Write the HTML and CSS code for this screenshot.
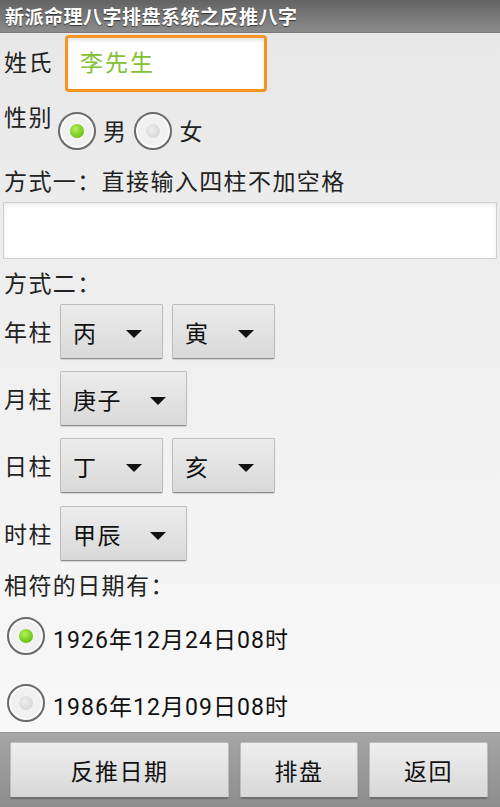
FILE: index.html
```html
<!DOCTYPE html>
<html lang="zh">
<head>
<meta charset="utf-8">
<title>新派命理八字排盘系统之反推八字</title>
<link rel="stylesheet" href="styles.css">
</head>
<body>
<div class="app">
  <header class="titlebar">新派命理八字排盘系统之反推八字</header>
  <main class="content">
    <div class="row-name">
      <span class="label name-label">姓氏</span>
      <div class="name-input">李先生</div>
    </div>
    <div class="row-gender">
      <span class="label gender-label">性别</span>
      <div class="radio-group">
        <span class="radio checked"></span><span class="radio-text">男</span>
        <span class="radio"></span><span class="radio-text">女</span>
      </div>
    </div>
    <div class="line">方式一：直接输入四柱不加空格</div>
    <div class="bazi-input"></div>
    <div class="line">方式二：</div>
    <div class="pillar">
      <span class="label pillar-label">年柱</span>
      <div class="spinner"><span>丙</span></div>
      <div class="spinner"><span>寅</span></div>
    </div>
    <div class="pillar">
      <span class="label pillar-label">月柱</span>
      <div class="spinner wide"><span>庚子</span></div>
    </div>
    <div class="pillar">
      <span class="label pillar-label">日柱</span>
      <div class="spinner"><span>丁</span></div>
      <div class="spinner"><span>亥</span></div>
    </div>
    <div class="pillar last">
      <span class="label pillar-label">时柱</span>
      <div class="spinner wide"><span>甲辰</span></div>
    </div>
    <div class="line">相符的日期有：</div>
    <div class="date-row">
      <span class="radio checked"></span><span class="date-text">1926年12月24日08时</span>
    </div>
    <div class="date-row">
      <span class="radio"></span><span class="date-text">1986年12月09日08时</span>
    </div>
  </main>
  <footer class="bottombar">
    <div class="btn btn-wide">反推日期</div>
    <div class="btn">排盘</div>
    <div class="btn">返回</div>
  </footer>
</div>
</body>
</html>
```
FILE: styles.css
```css
html, body {
  margin: 0;
  padding: 0;
}
body {
  width: 500px;
  height: 807px;
  overflow: hidden;
  font-family: Roboto, "Noto Sans CJK SC", sans-serif;
  color: #222;
}
.app {
  width: 500px;
  height: 807px;
  display: flex;
  flex-direction: column;
  background: linear-gradient(#e7e7e7, #fafafa);
}
.titlebar {
  height: 33px;
  line-height: 32px;
  box-sizing: border-box;
  padding-left: 5px;
  font-family: "Noto Sans CJK SC", sans-serif;
  font-size: 19px;
  letter-spacing: 0.5px;
  font-weight: bold;
  color: #fff;
  text-shadow: 0 1px 1px rgba(0,0,0,0.6);
  background: linear-gradient(#636363, #8b8b8b);
  border-bottom: 1px solid #7a7a7a;
  flex: none;
  white-space: nowrap;
}
.content {
  flex: 1;
  overflow: hidden;
  padding-left: 4px;
  font-size: 23px;
  letter-spacing: 1.4px;
}
.label {
  font-size: 23px;
  line-height: 30px;
}
.row-name {
  display: flex;
  align-items: center;
  margin-top: 2px;
  height: 57px;
}
.name-label {
  width: 61px;
}
.name-input {
  width: 202px;
  height: 57px;
  box-sizing: border-box;
  border: 3px solid #f39423;
  border-radius: 4px;
  background: #fff;
  box-shadow: inset 0 2px 4px rgba(0,0,0,0.12);
  color: #82c034;
  font-size: 23px;
  letter-spacing: 2px;
  line-height: 51px;
  padding-left: 12px;
}
.row-gender {
  display: flex;
  height: 76px;
}
.gender-label {
  margin-top: 12px;
  width: 54px;
}
.radio-group {
  display: flex;
  align-items: center;
  height: 40px;
  margin-top: 19px;
}
.radio {
  width: 38px;
  height: 38px;
  box-sizing: border-box;
  border-radius: 50%;
  border: 2px solid #6a6a6a;
  background: radial-gradient(circle, #f4f4f4 0%, #f0f0f0 60%, #e2e2e2 100%);
  box-shadow: inset 0 0 0 2px #fafafa;
  position: relative;
  flex: none;
}
.radio::after {
  content: "";
  position: absolute;
  left: 50%;
  top: 50%;
  width: 14px;
  height: 14px;
  margin: -7px 0 0 -7px;
  border-radius: 50%;
  background: radial-gradient(circle at 40% 40%, #eeeeee, #cfcfcf);
}
.radio.checked::after {
  background: radial-gradient(circle at 40% 35%, #b4f05a, #6cc414 70%, #5aa80e);
}
.radio-group .radio-text {
  margin: 4px 7px 0 7px;
  line-height: 30px;
}
.line {
  line-height: 30px;
  height: 30px;
  white-space: nowrap;
}
.bazi-input {
  height: 57px;
  margin: 4px 3px 11px -1px;
  box-sizing: border-box;
  background: #fff;
  border: 1px solid #cfcfcf;
  box-shadow: inset 0 2px 5px rgba(0,0,0,0.08);
}
.pillar {
  display: flex;
  align-items: center;
  gap: 9px;
  height: 55px;
  margin-top: 4px;
  margin-bottom: 8px;
}
.pillar + .pillar {
  margin-top: 12px;
  margin-bottom: 0;
}
.pillar.last {
  margin-top: 13px;
  margin-bottom: 11px;
}
.pillar-label {
  width: 47px;
  margin-top: 5px;
  white-space: nowrap;
}
.spinner {
  width: 103px;
  height: 55px;
  box-sizing: border-box;
  border: 1px solid #bdbdbd;
  border-bottom-color: #8f8f8f;
  border-radius: 2px;
  background: linear-gradient(#ececec, #d9d9d9);
  box-shadow: 0 1px 1px rgba(0,0,0,0.15);
  position: relative;
  display: flex;
  align-items: center;
  padding-left: 12px;
  font-size: 23px;
  color: #111;
}
.spinner.wide {
  width: 127px;
}
.spinner::after {
  content: "";
  position: absolute;
  right: 20px;
  top: 50%;
  margin-top: -2px;
  border-left: 8px solid transparent;
  border-right: 8px solid transparent;
  border-top: 8px solid #111;
}
.date-row {
  display: flex;
  align-items: center;
  height: 67px;
  padding-left: 3px;
}
.date-text {
  margin-left: 8px;
  margin-top: 5px;
  color: #111;
  letter-spacing: 1.05px;
  white-space: nowrap;
}
.bottombar {
  flex: none;
  height: 75px;
  box-sizing: border-box;
  padding: 9px 10px 0 10px;
  display: flex;
  gap: 11px;
  background: linear-gradient(#a6a6a6, #8d8d8d);
  border-top: 1px solid #9a9a9a;
}
.btn {
  width: 118px;
  height: 56px;
  box-sizing: border-box;
  border: 1px solid #bcbcbc;
  border-bottom-color: #707070;
  border-radius: 2px;
  background: linear-gradient(#eeeeee, #d8d8d8);
  box-shadow: 0 1px 1px rgba(0,0,0,0.25);
  display: flex;
  align-items: center;
  justify-content: center;
  font-size: 23px;
  letter-spacing: 1.5px;
  color: #111;
  flex: none;
}
.btn-wide {
  width: 219px;
}
.btn:last-child {
  width: 119px;
}
```
